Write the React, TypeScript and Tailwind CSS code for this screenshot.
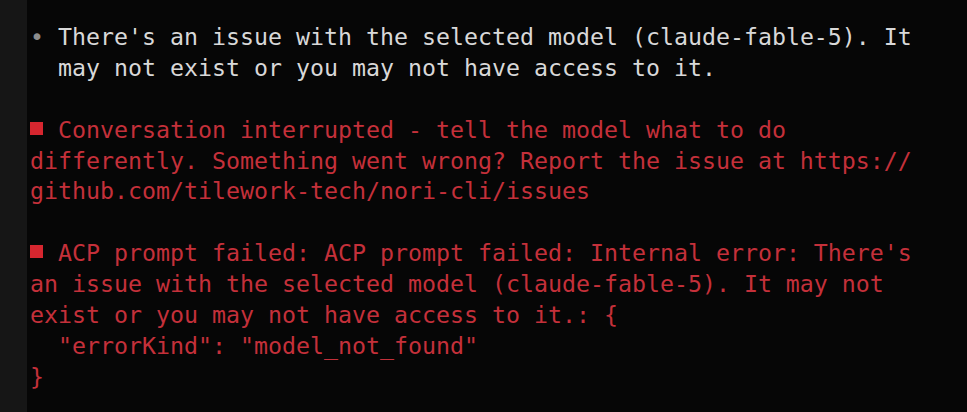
const white = [
  "There's an issue with the selected model (claude-fable-5). It",
  "may not exist or you may not have access to it.",
];

const interrupted = [
  "differently. Something went wrong? Report the issue at https://",
  "github.com/tilework-tech/nori-cli/issues",
];

const acp = [
  "an issue with the selected model (claude-fable-5). It may not",
  "exist or you may not have access to it.: {",
  '  "errorKind": "model_not_found"',
  "}",
];

const Line = ({ children, className = "" }: { children?: React.ReactNode; className?: string }) => (
  <div className={`h-[30.9px] whitespace-pre ${className}`}>{children}</div>
);

const Square = () => (
  <span className="inline-block w-[14px] align-top">
    <span className="mt-[7px] block h-[13px] w-[13px] bg-[#d6262f]" />
  </span>
);

export default function App() {
  return (
    <div className="flex h-[412px] w-[967px] overflow-hidden bg-[#060606]">
      <div className="w-[27px] shrink-0 bg-[#161616]" />
      <div
        className="pl-[3px] pt-[22px] text-[23.25px] leading-[30.9px]"
        style={{ fontFamily: '"DejaVu Sans Mono", monospace' }}
      >
        <Line className="text-[#d8d8d8]">
          <span className="text-[#8c8c8c]">•</span> {white[0]}
        </Line>
        <Line className="text-[#d8d8d8]">{"  " + white[1]}</Line>
        <Line />
        <Line className="text-[#c4303a]">
          <Square /> Conversation interrupted - tell the model what to do
        </Line>
        {interrupted.map((t) => (
          <Line key={t} className="text-[#c4303a]">
            {t}
          </Line>
        ))}
        <Line />
        <Line className="text-[#c4303a]">
          <Square /> ACP prompt failed: ACP prompt failed: Internal error: There's
        </Line>
        {acp.map((t) => (
          <Line key={t} className="text-[#c4303a]">
            {t}
          </Line>
        ))}
      </div>
    </div>
  );
}
